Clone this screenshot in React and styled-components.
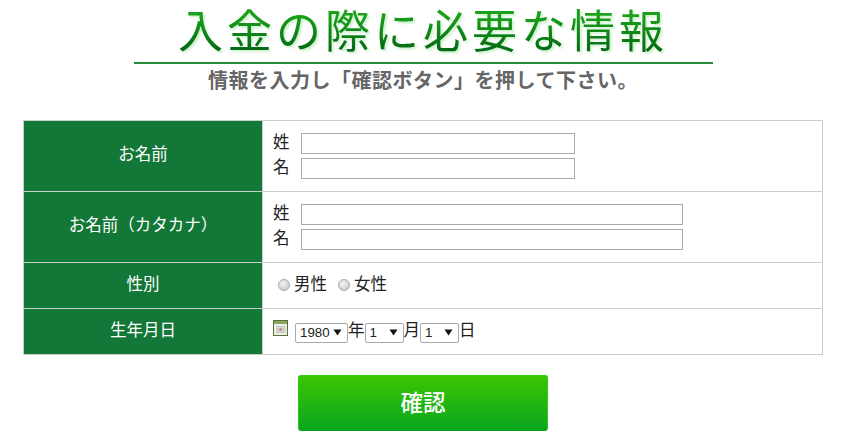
import React from "react";
import styled, { createGlobalStyle } from "styled-components";

const FONT = `"Liberation Sans", "Noto Sans CJK JP", sans-serif`;

const Global = createGlobalStyle`
  html, body { margin: 0; padding: 0; background: #fff; }
  body { font-family: ${FONT}; color: #222; overflow: hidden; }
`;

const Page = styled.div`
  width: 800px;
  margin-left: 23px;
  display: flex;
  flex-direction: column;
  align-items: center;
`;

const Header = styled.header`
  display: flex;
  flex-direction: column;
  align-items: center;
  height: 120px;
`;

const TitleBox = styled.div`
  width: 579px;
  height: 62px;
  border-bottom: 2px solid #2a8a3c;
  display: flex;
  justify-content: center;
`;

const Title = styled.h1`
  margin: 0;
  height: 62px;
  font-size: 45px;
  line-height: 65px;
  font-weight: 400;
  letter-spacing: 4px;
  white-space: nowrap;
  background: linear-gradient(180deg, #1aa01a 25%, #056b14 80%);
  -webkit-background-clip: text;
  background-clip: text;
  color: transparent;
  filter: drop-shadow(2px 2px 1px #cdf0cd);
`;

const Subtitle = styled.p`
  margin: 4px 0 0;
  font-size: 20px;
  line-height: 26px;
  font-weight: 700;
  letter-spacing: 0.5px;
  color: #666;
`;

const Table = styled.table`
  width: 800px;
  border-collapse: collapse;
  table-layout: fixed;
  font-size: 16.5px;
`;

const Row = styled.tr`
  height: ${(p) => p.$h}px;
`;

const Head = styled.th`
  width: 238px;
  background: #137737;
  color: #fff;
  font-weight: 400;
  text-align: center;
  border: 1px solid #ccc;
  padding: 0 0 6px;
`;

const Cell = styled.td`
  border: 1px solid #ccc;
  padding: 0 0 0 10px;
  vertical-align: middle;
`;

const NameGrid = styled.div`
  display: grid;
  grid-template-columns: 28px auto;
  justify-content: start;
  row-gap: 4px;
  align-items: center;
`;

const NameLabel = styled.label`
  font-size: 16.5px;
  line-height: 19px;
  height: 21px;
`;

const TextInput = styled.input`
  box-sizing: border-box;
  display: block;
  width: ${(p) => p.$w}px;
  height: 21px;
  border: 1px solid #a9a9a9;
  padding: 0 2px;
  background: #fff;
  outline: none;
`;

const RadioGroup = styled.div`
  display: flex;
  align-items: center;
  padding: 0 0 4px 5px;
  gap: 11px;
`;

const RadioItem = styled.label`
  display: flex;
  align-items: center;
  gap: 4px;
  font-size: 16.5px;
  line-height: 18px;
  height: 18px;
`;

const Radio = styled.input`
  appearance: none;
  margin: 3px 0 0;
  width: 12px;
  height: 12px;
  border-radius: 50%;
  border: 1px solid #aaa;
  background: radial-gradient(circle at 40% 35%, #f2f2f2, #cfcfcf 75%);
  box-sizing: border-box;
`;

const DateRow = styled.div`
  display: flex;
  align-items: center;
  height: 34px;
  font-size: 16.5px;
`;

const CalIcon = styled.svg`
  width: 15px;
  height: 16px;
  margin: -8px 7px 0 0;
  flex: none;
`;

const SelectBox = styled.span`
  position: relative;
  display: inline-block;
  width: ${(p) => p.$w}px;
  height: 20px;
  margin-top: 1px;
`;

const Select = styled.select`
  appearance: none;
  box-sizing: border-box;
  width: 100%;
  height: 100%;
  border: 1px solid #a9a9a9;
  border-radius: 2px;
  background: #fff;
  color: #222;
  font-family: ${FONT};
  font-size: 13.33px;
  padding: 0 0 0 4px;
  outline: none;
`;

const Arrow = styled.svg`
  position: absolute;
  right: 6px;
  top: 7px;
  width: 9px;
  height: 7px;
  pointer-events: none;
`;

const Unit = styled.span`
  line-height: 18px;
  height: 22px;
  width: 16.5px;
`;

const Submit = styled.button`
  width: 250px;
  height: 56px;
  margin-top: 20px;
  border: 1px solid #2ecb10;
  border-bottom-color: #0aa51f;
  border-radius: 3px;
  background: linear-gradient(180deg, #3cc603, #0aa51f);
  color: #fff;
  font-family: ${FONT};
  font-size: 22.5px;
  font-weight: 500;
  padding: 0 0 5px;
`;

const DateSelect = ({ w, value }) => (
  <SelectBox $w={w}>
    <Select defaultValue={value}>
      <option>{value}</option>
    </Select>
    <Arrow viewBox="0 0 9 7">
      <path d="M0.5 0.5h8L4.5 6.5z" fill="#111" />
    </Arrow>
  </SelectBox>
);

const Names = ({ w }) => (
  <NameGrid>
    <NameLabel>姓</NameLabel>
    <TextInput $w={w} type="text" />
    <NameLabel>名</NameLabel>
    <TextInput $w={w} type="text" />
  </NameGrid>
);

const CalendarIcon = () => (
  <CalIcon viewBox="0 0 15 16">
    <rect x="0.5" y="0.5" width="14" height="15" fill="#eef0ea" stroke="#5a7030" />
    <rect x="1" y="1" width="13" height="3" fill="#8aa860" />
    <path
      d="M3 6.5h9M3 8.5h9M3 10.5h9M3 12.5h9M4 6v7M6 6v7M8 6v7M10 6v7M12 6v7"
      stroke="#bdbdbd"
      strokeWidth="0.8"
      fill="none"
    />
    <rect x="6.5" y="8.5" width="2" height="2" fill="#d9675a" />
  </CalIcon>
);

export default function App() {
  return (
    <>
      <Global />
      <Page>
        <Header>
          <TitleBox>
            <Title>入金の際に必要な情報</Title>
          </TitleBox>
          <Subtitle>情報を入力し「確認ボタン」を押して下さい。</Subtitle>
        </Header>
        <Table>
          <tbody>
            <Row $h={71}>
              <Head>お名前</Head>
              <Cell><Names w={274} /></Cell>
            </Row>
            <Row $h={71}>
              <Head>お名前（カタカナ）</Head>
              <Cell><Names w={382} /></Cell>
            </Row>
            <Row $h={46}>
              <Head>性別</Head>
              <Cell>
                <RadioGroup>
                  <RadioItem><Radio type="radio" name="sex" />男性</RadioItem>
                  <RadioItem><Radio type="radio" name="sex" />女性</RadioItem>
                </RadioGroup>
              </Cell>
            </Row>
            <Row $h={46}>
              <Head>生年月日</Head>
              <Cell>
                <DateRow>
                  <CalendarIcon />
                  <DateSelect w={53} value="1980" />
                  <Unit>年</Unit>
                  <DateSelect w={39} value="1" />
                  <Unit>月</Unit>
                  <DateSelect w={39} value="1" />
                  <Unit>日</Unit>
                </DateRow>
              </Cell>
            </Row>
          </tbody>
        </Table>
        <Submit type="button">確認</Submit>
      </Page>
    </>
  );
}
